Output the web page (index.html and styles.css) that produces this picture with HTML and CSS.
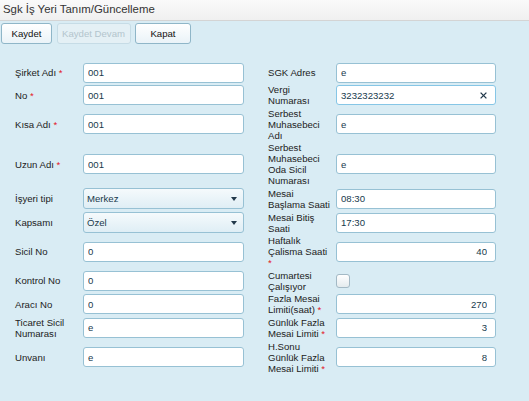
FILE: index.html
```html
<!DOCTYPE html>
<html lang="tr">
<head>
<meta charset="utf-8">
<title>Sgk İş Yeri Tanım/Güncelleme</title>
<link rel="stylesheet" href="styles.css">
</head>
<body>
<div class="titlebar">Sgk İş Yeri Tanım/Güncelleme</div>
<div class="toolbar">
  <button class="btn btn-save">Kaydet</button>
  <button class="btn btn-continue" disabled>Kaydet Devam</button>
  <button class="btn btn-close">Kapat</button>
</div>
<div class="form">
  <div class="lbl">Şirket Adı <span class="req">*</span></div>
  <input class="field" type="text" value="001">
  <div class="lbl lbl-r">SGK Adres</div>
  <input class="field" type="text" value="e">

  <div class="lbl">No <span class="req">*</span></div>
  <input class="field" type="text" value="001">
  <div class="lbl lbl-r">Vergi Numarası</div>
  <div class="field field-focus"><span class="val">3232323232</span><svg class="clear" width="7" height="7" viewBox="0 0 7 7"><path d="M0.6 0.6L6.4 6.4M6.4 0.6L0.6 6.4" stroke="#22394a" stroke-width="1.3" fill="none"/></svg></div>

  <div class="lbl">Kısa Adı <span class="req">*</span></div>
  <input class="field" type="text" value="001">
  <div class="lbl lbl-r">Serbest Muhasebeci Adı</div>
  <input class="field" type="text" value="e">

  <div class="lbl">Uzun Adı <span class="req">*</span></div>
  <input class="field" type="text" value="001">
  <div class="lbl lbl-r">Serbest Muhasebeci Oda Sicil Numarası</div>
  <input class="field" type="text" value="e">

  <div class="lbl">İşyeri tipi</div>
  <div class="field select"><span class="val">Merkez</span><svg class="arrow" width="6" height="4" viewBox="0 0 6 4"><path d="M0 0H6L3 4Z" fill="#22394a"/></svg></div>
  <div class="lbl lbl-r">Mesai Başlama Saati</div>
  <input class="field" type="text" value="08:30">

  <div class="lbl">Kapsamı</div>
  <div class="field select"><span class="val">Özel</span><svg class="arrow" width="6" height="4" viewBox="0 0 6 4"><path d="M0 0H6L3 4Z" fill="#22394a"/></svg></div>
  <div class="lbl lbl-r">Mesai Bitiş Saati</div>
  <input class="field" type="text" value="17:30">

  <div class="lbl">Sicil No</div>
  <input class="field" type="text" value="0">
  <div class="lbl lbl-r">Haftalık Çalisma Saati <span class="req">*</span></div>
  <input class="field num" type="text" value="40">

  <div class="lbl">Kontrol No</div>
  <input class="field" type="text" value="0">
  <div class="lbl lbl-r">Cumartesi Çalışıyor</div>
  <div class="check"></div>

  <div class="lbl">Aracı No</div>
  <input class="field" type="text" value="0">
  <div class="lbl lbl-r"><span class="ln">Fazla Mesai</span> <span class="ln">Limiti(saat) <span class="req">*</span></span></div>
  <input class="field num" type="text" value="270">

  <div class="lbl">Ticaret Sicil Numarası</div>
  <input class="field" type="text" value="e">
  <div class="lbl lbl-r"><span class="ln">Günlük Fazla</span> <span class="ln">Mesai Limiti <span class="req">*</span></span></div>
  <input class="field num" type="text" value="3">

  <div class="lbl">Unvanı</div>
  <input class="field" type="text" value="e">
  <div class="lbl lbl-r">H.Sonu <span class="ln">Günlük Fazla</span> <span class="ln">Mesai Limiti <span class="req">*</span></span></div>
  <input class="field num" type="text" value="8">
</div>
</body>
</html>
```
FILE: styles.css
```css
* { box-sizing: border-box; }
html, body { margin: 0; padding: 0; height: 100%; }
body {
  background: #d9ecf4;
  font-family: "Liberation Sans", Arial, sans-serif;
  font-size: 9.6px;
  color: #222;
}
.titlebar {
  height: 21px;
  line-height: 19px;
  padding-left: 3px;
  font-size: 11.4px;
  color: #333;
  background: linear-gradient(#fafafa, #f0f0f0);
  border-bottom: 1px solid #d4d4d4;
}
.toolbar {
  display: flex;
  gap: 4.5px;
  padding: 2px 0 2px 1px;
}
.btn {
  height: 21px;
  padding: 0;
  font-family: "Liberation Sans", Arial, sans-serif;
  font-size: 9.6px;
  color: #111;
  background: linear-gradient(#ffffff, #eaf3f8);
  border: 1px solid #8fb6c8;
  border-radius: 3px;
}
.btn-save { width: 51px; }
.btn-continue {
  width: 74px;
  color: #b3c5cd;
  background: #e4f0f5;
  border-color: #c6dce6;
}
.btn-close { width: 56px; }
.form {
  display: grid;
  grid-template-columns: 68px 161px 92px 160px;
  row-gap: 1.5px;
  align-items: center;
  padding: 16.5px 0 0 15px;
}
.lbl {
  line-height: 11.05px;
  color: #222;
}
.lbl-r { padding-left: 24px; padding-right: 4px; }
.ln { white-space: nowrap; }
.req { color: #e3141b; }
.field {
  display: flex;
  align-items: center;
  width: 100%;
  height: 20px;
  margin: 0;
  padding: 0 4px;
  font-family: "Liberation Sans", Arial, sans-serif;
  font-size: 9.6px;
  color: #173a4d;
  background: #fff;
  border: 1px solid #97c1d4;
  border-radius: 3px;
  outline: none;
}
.field.num { text-align: right; padding-right: 8px; }
.field-focus {
  justify-content: space-between;
  border-color: #86c6e6;
  padding-right: 8px;
}
.select {
  height: 21px;
  justify-content: space-between;
  padding: 0 6px 0 3px;
  background: linear-gradient(#f5fafc, #dfeef5);
  color: #1a3a4c;
}
.arrow { display: block; }
.clear { display: block; }
.check {
  width: 14px;
  height: 14px;
  border: 1px solid #a3b9c5;
  border-radius: 3px;
  background: linear-gradient(#ffffff, #e4ebee);
}
```
